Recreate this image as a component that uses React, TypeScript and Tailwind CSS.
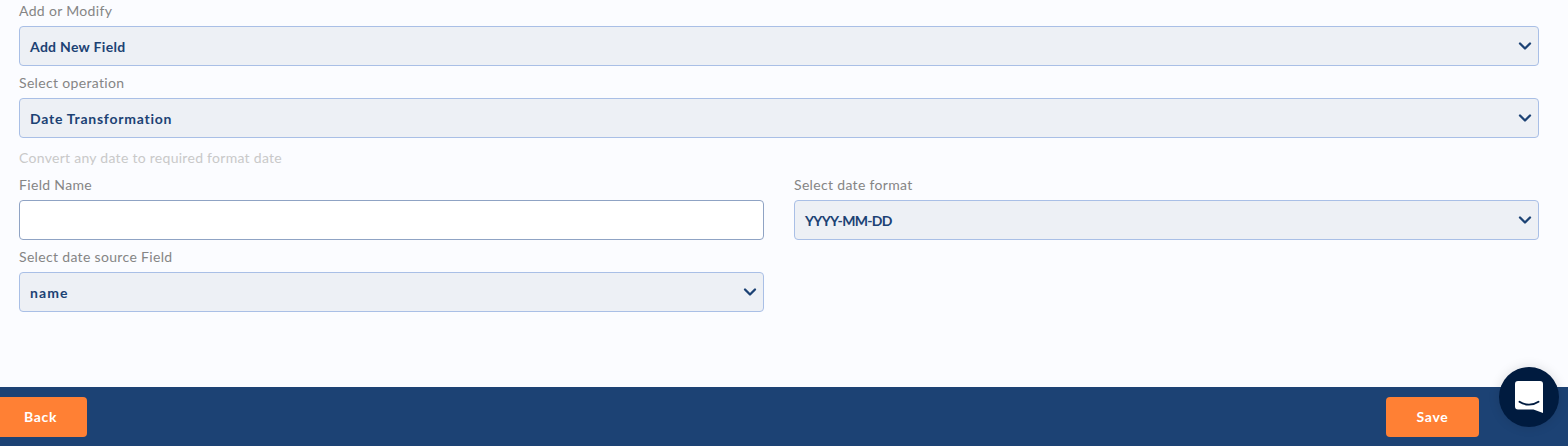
import { ChevronDown } from "lucide-react";

const font = { fontFamily: "Lato, 'Open Sans', sans-serif" };

const Label = ({ text }: { text: string }) => (
  <p className="flex h-8 items-center text-[14px] tracking-[0.33px] text-[#858585]">{text}</p>
);

const Select = ({ value, className }: { value: string; className: string }) => (
  <div className="flex h-10 items-center justify-between rounded border border-[#a9bfe6] bg-[#edf0f5] pl-[10px] pr-[3px]">
    <span className={`text-[14px] font-bold text-[#1c4274] ${className}`}>{value}</span>
    <ChevronDown className="-mt-px size-5 text-[#1c4274]" strokeWidth={2.8} />
  </div>
);

export default function App() {
  return (
    <div className="flex h-[446px] w-full flex-col overflow-hidden bg-[#fbfcff]" style={font}>
      <main className="h-[387px] pl-[19px] pr-[29px]">
        <div className="-mt-[6px]">
          <Label text="Add or Modify" />
          <Select value="Add New Field" className="tracking-[0.3px]" />
          <Label text="Select operation" />
          <Select value="Date Transformation" className="tracking-[0.75px]" />
          <p className="flex h-[37px] items-center pt-px text-[14px] tracking-[0.28px] text-[#c9c9c9]">
            Convert any date to required format date
          </p>
          <div className="-mt-[7px] grid grid-cols-2 gap-x-[30px]">
            <div>
              <Label text="Field Name" />
              <input className="h-10 w-full rounded border border-[#8fa3c4] bg-white" />
            </div>
            <div>
              <Label text="Select date format" />
              <Select value="YYYY-MM-DD" className="tracking-[-0.7px]" />
            </div>
            <div>
              <Label text="Select date source Field" />
              <Select value="name" className="tracking-[1.1px]" />
            </div>
          </div>
        </div>
      </main>
      <footer className="relative flex h-[59px] items-start justify-between bg-[#1c4274] pr-[89px] pt-[10px]">
        <button className="-ml-[6px] h-10 w-[93px] rounded bg-[#ff8034] pb-[2px] text-[14px] font-bold tracking-[0.7px] text-white">
          Back
        </button>
        <button className="h-10 w-[93px] rounded bg-[#ff8034] pb-[2px] text-[14px] font-bold tracking-[0.7px] text-white">
          Save
        </button>
        <div className="absolute left-[1499px] top-[-20px] flex size-[60px] items-center justify-center rounded-full bg-[#001b3f] shadow-[0_0_12px_rgba(0,0,0,0.12)]">
          <svg viewBox="0 0 28 32" className="h-8 w-7">
            <path
              fill="#fff"
              d="M3 0h22a3 3 0 0 1 3 3v29l-9.5-3.5H3a3 3 0 0 1-3-3V3a3 3 0 0 1 3-3z"
            />
            <path d="M4.5 20.8c5.5 3.8 13.5 3.8 19 0" fill="none" stroke="#001b3f" strokeWidth="1.9" strokeLinecap="round" />
          </svg>
        </div>
      </footer>
    </div>
  );
}
